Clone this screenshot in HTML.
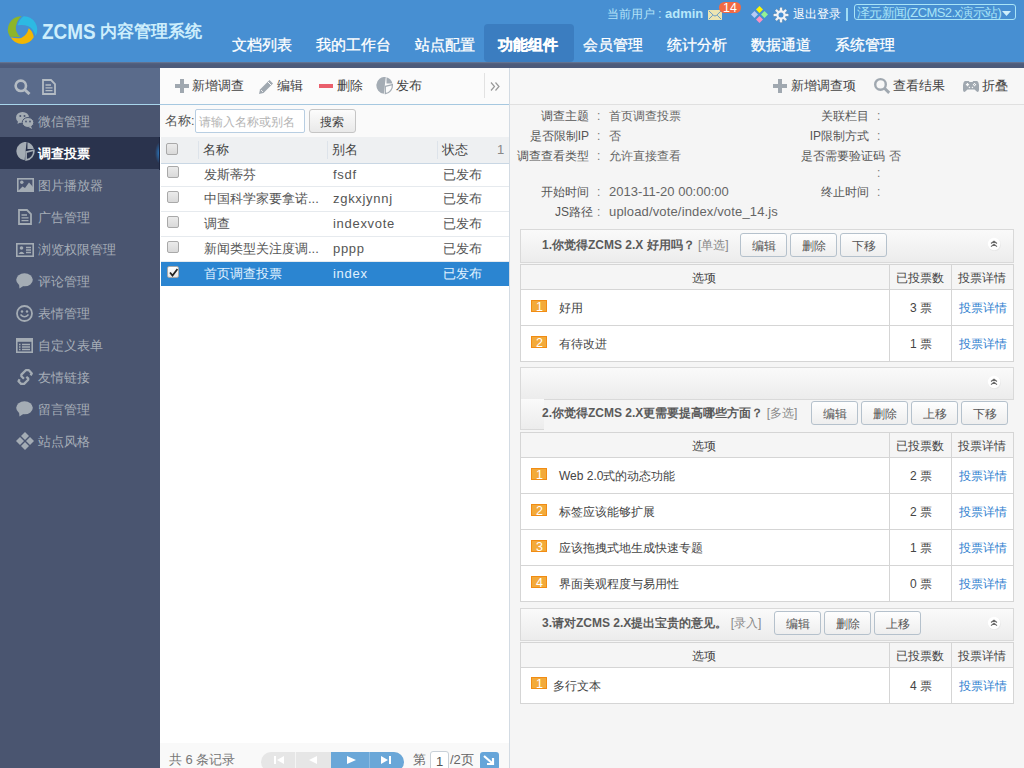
<!DOCTYPE html>
<html><head><meta charset="utf-8">
<style>
*{box-sizing:border-box;margin:0;padding:0}
html,body{width:1024px;height:768px;overflow:hidden;background:#f5f5f5;font-family:"Liberation Sans",sans-serif;font-size:13px;color:#555}
.a{position:absolute;white-space:nowrap;line-height:16px}
svg{position:absolute;display:block}
.nav{position:absolute;top:36px;font-size:15px;color:#fff;line-height:17px;white-space:nowrap;-webkit-text-stroke:0.3px #fff}
.mi{position:absolute;left:0;width:160px;height:32px;color:#a6adb7}
.mi span{position:absolute;left:38px;top:9px;line-height:16px;white-space:nowrap}
.mi svg{left:16px;top:7px}
.cb{position:absolute;width:12px;height:12px;border:1px solid #a9a9a9;border-radius:2px;background:linear-gradient(#ebebeb,#d9d9d9)}
.row{position:absolute;left:161px;width:348px;height:25px;border-bottom:1px solid #e6eaee;background:#fff}
.row span{position:absolute;top:4px;line-height:16px;white-space:nowrap;color:#555}
.btn{position:absolute;height:24px;width:47px;border:1px solid #b5c1cc;border-radius:3px;background:linear-gradient(#fefefe,#eeeeee);color:#555;text-align:center;line-height:24px;font-size:12px}
.qh{position:absolute;left:520px;width:494px;height:33px;border:1px solid #d9d9d9;background:linear-gradient(#fafafa,#ececec)}
.qt{position:absolute;font-weight:bold;color:#5a5a5a;line-height:16px;white-space:nowrap;font-size:12px}
.qs{color:#888;font-weight:normal}
.tb{position:absolute;left:520px;width:494px;border:1px solid #d5d5d5;background:#fff}
.th{position:absolute;left:0;top:0;width:492px;height:25px;background:#f5f5f5;border-bottom:1px solid #d5d5d5}
.tr{position:absolute;left:0;width:492px;height:36px;border-bottom:1px solid #d5d5d5}
.vl{position:absolute;top:0;bottom:0;width:1px;background:#d5d5d5}
.num{position:absolute;left:10px;width:16px;height:12px;background:#f3aa3a;border:1px solid #f18c14;color:#fff;font-size:12.5px;line-height:12px;padding-left:4px;overflow:visible}
.tx{position:absolute;line-height:16px;white-space:nowrap;color:#444;font-size:12px}
.lnk{color:#2f80cf}
.col{position:absolute;width:20px;height:20px}
.il{color:#555;font-size:12px}.ic{color:#777;font-size:12px}.iv{color:#666;font-size:12px}
</style></head><body>
<!-- header -->
<div style="position:absolute;left:0;top:0;width:1024px;height:62px;background:#478fd2"></div>
<div style="position:absolute;left:0;top:62px;width:1024px;height:6px;background:linear-gradient(#6a7c99 0px,#52607f 1.5px,#4c5a7a 3px)"></div>
<!-- logo -->
<svg style="left:4px;top:12px" width="38" height="36" viewBox="0 0 38 36"><g transform="translate(18.4 18.15) scale(0.9) translate(-18.3 -19.2)">
 <path d="M17.3 3.75 A14.8 14.8 0 0 0 4.5 26.5 L16 26.9 Q10.5 22 11 15.5 Q12.5 7.5 17.3 3.75 Z" fill="#8db52a"/>
 <path d="M19.7 3.75 A14.8 14.8 0 0 1 32.8 25.8 Q31 18 25 15 Q19 12.5 12.9 13.8 Q15 7 19.7 3.75 Z" fill="#2db9e3"/>
 <path d="M25.3 17.1 Q30 20.5 30.9 27.2 A14.8 14.8 0 0 1 5.2 27.2 Q12 28.8 17 27.8 Q23.5 25 25.3 17.1 Z" fill="#f2b602"/></g>
</svg>
<div class="a" style="left:42px;top:20px;font-size:22px;line-height:24px;font-weight:bold;color:#cdeefc;transform:scaleX(0.86);transform-origin:0 0">ZCMS</div>
<div class="a" style="left:100px;top:21px;font-size:17.2px;line-height:20px;font-weight:bold;color:#cdeefc">内容管理系统</div>
<!-- nav -->
<div class="nav" style="left:232px">文档列表</div>
<div class="nav" style="left:316px">我的工作台</div>
<div class="nav" style="left:415px">站点配置</div>
<div style="position:absolute;left:484px;top:24px;width:90px;height:38px;background:#3b7dc0;border-radius:4px"></div>
<div class="nav" style="left:498px;font-weight:bold">功能组件</div>
<div class="nav" style="left:583px">会员管理</div>
<div class="nav" style="left:667px">统计分析</div>
<div class="nav" style="left:751px">数据通道</div>
<div class="nav" style="left:835px">系统管理</div>
<!-- user area -->
<div class="a" style="left:607px;top:6px;color:#b3e3f8;font-size:12px">当前用户</div><div class="a" style="left:658px;top:6px;color:#b3e3f8">:</div><div class="a" style="left:665px;top:6px;color:#b8e8fa;font-weight:bold">admin</div>
<svg style="left:708px;top:10px" width="14" height="10" viewBox="0 0 14 10"><rect x="0" y="0" width="14" height="10" fill="#ece5b2"/><path d="M0.8 0.8 L5.5 5.4 Q7 6.6 8.5 5.4 L13.2 0.8 M0.8 9.2 L4.8 5.2 M13.2 9.2 L9.2 5.2" stroke="#5b94c8" stroke-width="0.9" fill="none"/></svg>
<div class="a" style="left:719px;top:2px;width:22px;height:11px;border-radius:6px;background:#f36a43;color:#fff;font-size:12.5px;line-height:13px;text-align:center;overflow:hidden">14</div>
<svg style="left:751px;top:6px" width="17" height="17" viewBox="0 0 17 17">
 <path d="M8.5 0 L12 3.5 L8.5 7 L5 3.5Z" fill="#fbf70a"/>
 <path d="M13.5 5 L17 8.5 L13.5 12 L10 8.5Z" fill="#94f294"/>
 <path d="M8.5 10 L12 13.5 L8.5 17 L5 13.5Z" fill="#fc92c2"/>
 <path d="M3.5 5 L7 8.5 L3.5 12 L0 8.5Z" fill="#b8cbf6"/>
</svg>
<svg style="left:773px;top:7px" width="16" height="16" viewBox="0 0 16 16">
 <g fill="#eef2f6" stroke="#3d6f9e" stroke-width="0.4">
 <rect x="6.6" y="0.2" width="2.8" height="4.5"/><rect x="6.6" y="11.3" width="2.8" height="4.5"/>
 <rect x="0.2" y="6.6" width="4.5" height="2.8"/><rect x="11.3" y="6.6" width="4.5" height="2.8"/>
 <g transform="rotate(45 8 8)"><rect x="6.7" y="0.6" width="2.6" height="4.2"/><rect x="6.7" y="11.2" width="2.6" height="4.2"/><rect x="0.6" y="6.7" width="4.2" height="2.6"/><rect x="11.2" y="6.7" width="4.2" height="2.6"/></g>
 </g>
 <circle cx="8" cy="8" r="3.6" fill="none" stroke="#eef2f6" stroke-width="2.2"/>
</svg>
<div class="a" style="left:793px;top:6px;color:#fff;font-size:12px">退出登录</div>
<div style="position:absolute;left:846px;top:8px;width:1.5px;height:13px;background:#9fdcf4"></div>
<div style="position:absolute;left:854px;top:4px;width:162px;height:16px;border:1px solid #a9e4f7;border-radius:3px"></div>
<div class="a" style="left:857px;top:5px;color:#a9e4f7;letter-spacing:-0.6px">泽元新闻(ZCMS2.x演示站)</div>
<svg style="left:1002px;top:11px" width="9" height="5" viewBox="0 0 9 5"><path d="M0 0 L9 0 L4.5 5Z" fill="#cfeefb"/></svg>

<!-- sidebar -->
<div style="position:absolute;left:0;top:68px;width:160px;height:700px;background:#4a5570"></div>
<div style="position:absolute;left:0;top:68px;width:160px;height:36px;background:#5a6b8b"></div>
<div style="position:absolute;left:0;top:104px;width:160px;height:1px;background:#a9d6ec"></div>
<svg style="left:14px;top:79px" width="17" height="16" viewBox="0 0 17 16"><circle cx="6.8" cy="6.8" r="5.2" fill="none" stroke="#b4bcc4" stroke-width="2.6"/><path d="M10.5 10.5 L15.5 15" stroke="#b4bcc4" stroke-width="3"/></svg>
<svg style="left:42px;top:79px" width="14" height="16" viewBox="0 0 14 16"><path d="M1 1 H9 L13 5 V15 H1Z" fill="none" stroke="#b4bcc4" stroke-width="1.8"/><path d="M3.5 6 H9 M3.5 8.8 H10.5 M3.5 11.6 H10.5" stroke="#b4bcc4" stroke-width="1.3"/></svg>

<div class="mi" style="top:105px"><svg width="18" height="18" viewBox="0 0 18 18" style="top:6px"><ellipse cx="6.5" cy="6.5" rx="6.5" ry="5.6" fill="#a4acb4"/><path d="M2 10 L1.5 13 L5 11Z" fill="#a4acb4"/><ellipse cx="12" cy="11.5" rx="5.8" ry="5" fill="#a4acb4" stroke="#4a5570" stroke-width="1"/><path d="M15 15 L16 18 L12.5 16Z" fill="#a4acb4"/><circle cx="4.3" cy="5" r="1" fill="#4a5570"/><circle cx="8.5" cy="5" r="1" fill="#4a5570"/><circle cx="10" cy="10.5" r="0.9" fill="#4a5570"/><circle cx="14" cy="10.5" r="0.9" fill="#4a5570"/></svg><span>微信管理</span></div>
<div class="mi" style="top:137px;background:#2a334d;color:#fff;font-weight:bold"><svg width="19" height="19" viewBox="0 0 18 18" style="top:4.6px;left:15.6px"><g transform="scale(1.03)"><path d="M9.75 0 A8.45 8.45 0 1 0 7.9 16.8 Z" fill="#a4acb4"/><path d="M10.5 0.2 A8.45 8.45 0 0 1 16.4 6.4 L10.5 6.4 Z" fill="#a4acb4"/><path d="M9.3 9.3 L16.4 7.6 A8.3 8.3 0 0 1 9.3 16.6 Z" fill="none" stroke="#a4acb4" stroke-width="1.5"/></g></svg><span>调查投票</span></div>
<div style="position:absolute;left:150px;top:140px;width:20px;height:26px;background:radial-gradient(ellipse 5px 11px at 10px 13px,#2a7fcc 0%,rgba(42,127,204,0.55) 45%,rgba(42,51,77,0) 100%)"></div><div style="position:absolute;left:159px;top:137px;width:1px;height:33px;background:#1c2540"></div>
<div class="mi" style="top:169px"><svg width="17" height="14" viewBox="0 0 17 14" style="top:9px;left:16.5px"><rect x="0.8" y="0.8" width="15.4" height="12.4" fill="none" stroke="#a4acb4" stroke-width="1.6"/><circle cx="4.8" cy="4.3" r="1.7" fill="#a4acb4"/><path d="M1 13 L5.5 8.5 L8 10 L12 4.5 L16 9 V13Z" fill="#a4acb4"/></svg><span>图片播放器</span></div>
<div class="mi" style="top:201px"><svg width="14" height="16" viewBox="0 0 14 16" style="left:18px;top:8px"><path d="M1 1 H9 L13 5 V15 H1Z" fill="none" stroke="#a4acb4" stroke-width="1.8"/><path d="M3.5 6 H9 M3.5 8.8 H10.5 M3.5 11.6 H10.5" stroke="#a4acb4" stroke-width="1.3"/></svg><span>广告管理</span></div>
<div class="mi" style="top:233px"><svg width="18" height="14" viewBox="0 0 18 14" style="top:10px"><rect x="0.8" y="0.8" width="16.4" height="12.4" fill="none" stroke="#a4acb4" stroke-width="1.6"/><circle cx="5.5" cy="5" r="1.8" fill="#a4acb4"/><path d="M2.5 11 Q5.5 6.5 8.5 11Z" fill="#a4acb4"/><path d="M10 4.5 H15 M10 7 H15 M10 9.5 H15" stroke="#a4acb4" stroke-width="1.3"/></svg><span>浏览权限管理</span></div>
<div class="mi" style="top:265px"><svg width="17" height="16" viewBox="0 0 17 16" style="top:8px"><ellipse cx="8.5" cy="6.8" rx="8.3" ry="6.5" fill="#a4acb4"/><path d="M3 11 L3.5 15.5 L8 12.5Z" fill="#a4acb4"/></svg><span>评论管理</span></div>
<div class="mi" style="top:297px"><svg width="17" height="17" viewBox="0 0 17 17" style="top:8px"><circle cx="8.5" cy="8.5" r="7.5" fill="none" stroke="#a4acb4" stroke-width="1.8"/><circle cx="6" cy="6.5" r="1.2" fill="#a4acb4"/><circle cx="11" cy="6.5" r="1.2" fill="#a4acb4"/><path d="M4.5 9.5 Q8.5 14 12.5 9.5" fill="none" stroke="#a4acb4" stroke-width="1.6"/></svg><span>表情管理</span></div>
<div class="mi" style="top:329px"><svg width="17" height="15" viewBox="0 0 17 15" style="top:9px"><rect x="0.8" y="0.8" width="15.4" height="13.4" fill="none" stroke="#a4acb4" stroke-width="1.6"/><rect x="0.8" y="0.8" width="15.4" height="3" fill="#a4acb4"/><path d="M3 6.5 H4.5 M3 9 H4.5 M3 11.5 H4.5 M6 6.5 H14 M6 9 H14 M6 11.5 H14" stroke="#a4acb4" stroke-width="1.4"/></svg><span>自定义表单</span></div>
<div class="mi" style="top:361px"><svg width="26" height="26" viewBox="0 0 26 26" style="left:12px;top:4px"><path d="M18.6 10.4 L19.8 8.4 L16.9 5.2 L13.8 5.2 L9.4 9.6 L9.4 11.2 L11.9 13.7 M14.3 11.8 L16.2 13.4 L16.2 14.8 L12.1 18.9 L9.1 18.9 L6.5 16.3 L7.6 14.3" fill="none" stroke="#a4acb4" stroke-width="2.3" stroke-linejoin="round"/></svg><span>友情链接</span></div>
<div class="mi" style="top:393px"><svg width="17" height="16" viewBox="0 0 17 16" style="top:8px"><ellipse cx="8.5" cy="6.8" rx="8.3" ry="6.5" fill="#a4acb4"/><path d="M3 11 L3.5 15.5 L8 12.5Z" fill="#a4acb4"/></svg><span>留言管理</span></div>
<div class="mi" style="top:425px"><svg width="18" height="18" viewBox="0 0 18 18" style="top:7px"><path d="M9 0 L13 4 L9 8 L5 4Z M14 5 L18 9 L14 13 L10 9Z M9 10 L13 14 L9 18 L5 14Z M4 5 L8 9 L4 13 L0 9Z" fill="#a4acb4"/></svg><span>站点风格</span></div>

<!-- middle panel -->
<div style="position:absolute;left:160px;top:68px;width:349px;height:700px;background:#fff"></div>
<div style="position:absolute;left:160px;top:68px;width:349px;height:36px;background:#fbfbfb"></div>
<div style="position:absolute;left:160px;top:104px;width:349px;height:1px;background:#a6c8e0"></div>
<div style="position:absolute;left:160px;top:105px;width:349px;height:32px;background:#fafafa"></div>
<div style="position:absolute;left:509px;top:68px;width:1px;height:700px;background:#d3dbe3"></div>
<!-- toolbar mid -->
<svg style="left:175px;top:79px" width="14" height="14" viewBox="0 0 14 14"><path d="M5 0 H9 V5 H14 V9 H9 V14 H5 V9 H0 V5 H5Z" fill="#a0a8b0"/></svg>
<div class="a" style="left:192px;top:78px;color:#444">新增调查</div>
<svg style="left:258px;top:79px" width="16" height="16" viewBox="0 0 16 16"><path d="M11.5 1 L15 4.5 L5.5 14 L1 15 L2 10.5Z" fill="#a0a8b0"/><path d="M10 3 L13 6" stroke="#fbfbfb" stroke-width="1"/><path d="M3 11 L5 13" stroke="#fbfbfb" stroke-width="0.8"/></svg>
<div class="a" style="left:277px;top:78px;color:#444">编辑</div>
<div style="position:absolute;left:319px;top:84px;width:14px;height:4px;background:#ea5f6c"></div>
<div class="a" style="left:337px;top:78px;color:#444">删除</div>
<svg style="left:376px;top:77px" width="18" height="18" viewBox="0 0 18 18"><path d="M9.75 0 A8.45 8.45 0 1 0 7.9 16.8 Z" fill="#a4acb4"/><path d="M10.5 0.2 A8.45 8.45 0 0 1 16.4 6.4 L10.5 6.4 Z" fill="#a4acb4"/><path d="M9.3 9.3 L16.4 7.6 A8.3 8.3 0 0 1 9.3 16.6 Z" fill="none" stroke="#a4acb4" stroke-width="1.25"/></svg>
<div class="a" style="left:396px;top:78px;color:#444">发布</div>
<div style="position:absolute;left:484px;top:73px;width:1px;height:25px;background:#e2e2e2"></div>
<svg style="left:490px;top:82px" width="10" height="9" viewBox="0 0 10 9"><path d="M1 0.5 L4.5 4.5 L1 8.5 M5.5 0.5 L9 4.5 L5.5 8.5" fill="none" stroke="#999" stroke-width="1.2"/></svg>
<!-- search -->
<div class="a" style="left:165px;top:113px;color:#555;font-size:12.5px">名称:</div>
<div style="position:absolute;left:195px;top:109px;width:110px;height:24px;border:1px solid #b8cee2;border-radius:2px;background:#fff"></div>
<div class="a" style="left:199px;top:114px;color:#b4b4b4;font-size:12px">请输入名称或别名</div>
<div style="position:absolute;left:309px;top:109px;width:47px;height:24px;border:1px solid #c5c5c5;border-radius:3px;background:linear-gradient(#fcfcfc,#e9e9e9)"></div>
<div class="a" style="left:320px;top:114px;color:#444;font-size:12px">搜索</div>
<!-- grid header -->
<div style="position:absolute;left:161px;top:137px;width:348px;height:27px;background:#eef0f2;border-bottom:1px solid #c9d7e4"></div>
<div class="cb" style="left:166px;top:143px"></div>
<div style="position:absolute;left:198px;top:141px;width:1px;height:18px;background:#dde3ea"></div>
<div style="position:absolute;left:327px;top:141px;width:1px;height:18px;background:#dde3ea"></div>
<div style="position:absolute;left:437px;top:141px;width:1px;height:18px;background:#dde3ea"></div>
<div class="a" style="left:203px;top:142px;color:#444">名称</div>
<div class="a" style="left:332px;top:142px;color:#444">别名</div>
<div class="a" style="left:442px;top:142px;color:#444">状态</div>
<div class="a" style="left:497px;top:142px;color:#888">1</div>
<!-- rows -->
<div class="row" style="top:164px;height:23px"><div class="cb" style="left:6px;top:2px"></div><span style="left:43px;top:3px">发斯蒂芬</span><span style="left:172px;letter-spacing:0.7px;top:3px">fsdf</span><span style="left:282px;top:3px">已发布</span></div>
<div class="row" style="top:187px"><div class="cb" style="left:6px;top:4px"></div><span style="left:43px">中国科学家要拿诺...</span><span style="left:172px;letter-spacing:0.7px">zgkxjynnj</span><span style="left:282px">已发布</span></div>
<div class="row" style="top:212px"><div class="cb" style="left:6px;top:4px"></div><span style="left:43px">调查</span><span style="left:172px;letter-spacing:0.7px">indexvote</span><span style="left:282px">已发布</span></div>
<div class="row" style="top:237px"><div class="cb" style="left:6px;top:4px"></div><span style="left:43px">新闻类型关注度调...</span><span style="left:172px;letter-spacing:0.7px">pppp</span><span style="left:282px">已发布</span></div>
<div class="row" style="top:262px;height:24px;background:#2b85d1;border-bottom:none"><div class="cb" style="left:6px;top:4px;background:linear-gradient(#fff,#e6e6e6)"><svg style="left:1px;top:1px" width="9" height="9" viewBox="0 0 9 9"><path d="M1 4.5 L3.5 7.5 L8.5 1" fill="none" stroke="#222" stroke-width="1.8"/></svg></div><span style="left:43px;color:#e0f2ff">首页调查投票</span><span style="left:172px;color:#e0f2ff;letter-spacing:0.7px">index</span><span style="left:282px;color:#e0f2ff">已发布</span></div>
<!-- footer -->
<div style="position:absolute;left:160px;top:743px;width:349px;height:25px;background:#f9f9f9"></div>
<div class="a" style="left:169px;top:752px;color:#777">共 6 条记录</div>
<div style="position:absolute;left:261px;top:752px;width:143px;height:20px;border-radius:10px;overflow:hidden;background:#e6e6e6">
 <div style="position:absolute;left:34px;top:0;width:1px;height:20px;background:#f4f4f4"></div>
 <div style="position:absolute;left:70px;top:0;width:73px;height:20px;background:#6aa7d8"></div>
 <div style="position:absolute;left:108px;top:0;width:1px;height:20px;background:#8bbbe2"></div>
 <svg style="left:13px;top:3px" width="10" height="10" viewBox="0 0 10 10"><path d="M0 1 H2 V9 H0Z M10 1 L3 5 L10 9Z" fill="#fff"/></svg>
 <svg style="left:47px;top:3px" width="10" height="10" viewBox="0 0 10 10"><path d="M9 1 L1 5 L9 9Z" fill="#fff"/></svg>
 <svg style="left:85px;top:3px" width="11" height="10" viewBox="0 0 11 10"><path d="M1 1 L10 5 L1 9Z" fill="#fff"/></svg>
 <svg style="left:120px;top:3px" width="11" height="10" viewBox="0 0 11 10"><path d="M0 1 L7 5 L0 9Z M8 1 H10 V9 H8Z" fill="#fff"/></svg>
</div>
<div class="a" style="left:413px;top:752px;color:#666">第</div>
<div style="position:absolute;left:430px;top:751px;width:19px;height:21px;border:1px solid #c8d0d8;border-radius:3px;background:#fff"></div>
<div class="a" style="left:436px;top:754px;color:#555">1</div>
<div class="a" style="left:450px;top:752px;color:#666">/2页</div>
<div style="position:absolute;left:480px;top:752px;width:19px;height:18px;border-radius:3px;background:#66a5d9"></div>
<svg style="left:483px;top:755px" width="13" height="12" viewBox="0 0 13 12"><path d="M1 1 L9 8 M4 9 H10 V3" fill="none" stroke="#fff" stroke-width="2.2"/></svg>

<!-- right panel -->
<div style="position:absolute;left:510px;top:68px;width:514px;height:37px;background:#f7f7f7;border-bottom:1px solid #e0e0e0"></div>
<svg style="left:773px;top:79px" width="14" height="14" viewBox="0 0 14 14"><path d="M5 0 H9 V5 H14 V9 H9 V14 H5 V9 H0 V5 H5Z" fill="#a0a8b0"/></svg>
<div class="a" style="left:791px;top:78px;color:#444">新增调查项</div>
<svg style="left:873px;top:77px" width="18" height="17" viewBox="0 0 18 17"><circle cx="7.5" cy="7.4" r="5.3" fill="none" stroke="#a0a8b0" stroke-width="2.4"/><path d="M11.2 11 L16.2 15.8" stroke="#a0a8b0" stroke-width="3"/></svg>
<div class="a" style="left:893px;top:78px;color:#444">查看结果</div>
<svg style="left:958px;top:76px" width="26" height="20" viewBox="0 0 26 20"><path d="M6.8 5 L10.8 5 L11.5 5.9 L14.5 5.9 L15.2 5 L19.2 5 Q20.8 5.8 21 9 L21 14 Q21 16 19.3 16 L16.5 13.5 L9.5 13.5 L6.7 16 Q5 16 5 14 L5 9 Q5.2 5.8 6.8 5Z" fill="#a0a8b0"/><path d="M9.5 7 V10.2 M7.9 8.6 H11.1 M16.5 7 V10.2 M14.9 8.6 H18.1" stroke="#f7f7f7" stroke-width="1.3"/><circle cx="16.5" cy="8.6" r="0.6" fill="#a0a8b0"/><rect x="10.8" y="10.8" width="1.3" height="1.3" fill="#f7f7f7"/><rect x="13.8" y="10.8" width="1.3" height="1.3" fill="#f7f7f7"/></svg>
<div class="a" style="left:982px;top:78px;color:#444">折叠</div>

<!-- info -->
<div class="a il" style="right:435px;top:108px">调查主题</div><div class="a ic" style="left:597px;top:108px">:</div><div class="a iv" style="left:609px;top:108px">首页调查投票</div>
<div class="a il" style="right:435px;top:128px">是否限制IP</div><div class="a ic" style="left:597px;top:128px">:</div><div class="a iv" style="left:609px;top:128px">否</div>
<div class="a il" style="right:435px;top:148px">调查查看类型</div><div class="a ic" style="left:597px;top:148px">:</div><div class="a iv" style="left:609px;top:148px">允许直接查看</div>
<div class="a il" style="right:435px;top:184px">开始时间</div><div class="a ic" style="left:597px;top:184px">:</div><div class="a iv" style="left:609px;top:184px;font-size:13px">2013-11-20 00:00:00</div>
<div class="a il" style="right:431px;top:204px">JS路径</div><div class="a ic" style="left:597px;top:204px">:</div><div class="a iv" style="left:609px;top:204px;font-size:13px;letter-spacing:0.15px">upload/vote/index/vote_14.js</div>
<div class="a il" style="right:155px;top:108px">关联栏目</div><div class="a ic" style="left:877px;top:108px">:</div>
<div class="a il" style="right:155px;top:128px">IP限制方式</div><div class="a ic" style="left:877px;top:128px">:</div>
<div class="a il" style="right:139px;top:148px">是否需要验证码</div><div class="a iv" style="left:889px;top:148px">否</div><div class="a ic" style="left:877px;top:165px">:</div>
<div class="a il" style="right:155px;top:184px">终止时间</div><div class="a ic" style="left:877px;top:184px">:</div>

<!-- question 1 -->
<div class="qh" style="top:229px;height:34px"></div>
<div class="qt" style="left:542px;top:237px">1.你觉得ZCMS 2.X 好用吗？ <span class="qs">[单选]</span></div>
<div class="btn" style="left:740px;top:233px">编辑</div>
<div class="btn" style="left:790px;top:233px">删除</div>
<div class="btn" style="left:840px;top:233px">下移</div>
<svg style="left:986px;top:236px" width="17" height="17" viewBox="0 0 17 17"><circle cx="8.6" cy="8.6" r="6.4" fill="#e2e2e2" opacity="0.7"/><circle cx="8.1" cy="8" r="6.2" fill="#fff"/><path d="M5 7.5 L8 5.2 L11 7.5 M5 10.6 L8 8.3 L11 10.6" fill="none" stroke="#6a6a6a" stroke-width="1.1"/></svg>
<div class="tb" style="top:264px;height:98px">
 <div class="th"></div>
 <div class="tr" style="top:25px"></div>
 <div class="tr" style="top:61px;border-bottom:none"></div>
 <div class="vl" style="left:368px"></div><div class="vl" style="left:430px"></div>
 <div class="tx" style="left:171px;top:5px">选项</div>
 <div class="tx" style="left:375px;top:5px">已投票数</div>
 <div class="tx" style="left:437px;top:5px">投票详情</div>
 <div class="num" style="top:35px">1</div><div class="tx" style="left:38px;top:35px">好用</div>
 <div class="tx" style="left:389px;top:35px">3 票</div><div class="tx lnk" style="left:438px;top:35px">投票详情</div>
 <div class="num" style="top:71px">2</div><div class="tx" style="left:38px;top:71px">有待改进</div>
 <div class="tx" style="left:389px;top:71px">1 票</div><div class="tx lnk" style="left:438px;top:71px">投票详情</div>
</div>

<!-- question 2 -->
<div class="qh" style="top:367px;height:33px"></div>
<div style="position:absolute;left:520px;top:399px;width:24px;height:31px;border:1px solid #d9d9d9;border-top:none;border-right:none;background:linear-gradient(#fafafa,#ececec)"></div>
<svg style="left:986px;top:374px" width="17" height="17" viewBox="0 0 17 17"><circle cx="8.6" cy="8.6" r="6.4" fill="#e2e2e2" opacity="0.7"/><circle cx="8.1" cy="8" r="6.2" fill="#fff"/><path d="M5 7.5 L8 5.2 L11 7.5 M5 10.6 L8 8.3 L11 10.6" fill="none" stroke="#6a6a6a" stroke-width="1.1"/></svg>
<div class="qt" style="left:542px;top:405px">2.你觉得ZCMS 2.X更需要提高哪些方面？ <span class="qs">[多选]</span></div>
<div class="btn" style="left:811px;top:401px">编辑</div>
<div class="btn" style="left:861px;top:401px">删除</div>
<div class="btn" style="left:911px;top:401px">上移</div>
<div class="btn" style="left:961px;top:401px">下移</div>
<div class="tb" style="top:432px;height:170px">
 <div class="th"></div>
 <div class="tr" style="top:25px"></div>
 <div class="tr" style="top:61px"></div>
 <div class="tr" style="top:97px"></div>
 <div class="tr" style="top:133px;border-bottom:none"></div>
 <div class="vl" style="left:368px"></div><div class="vl" style="left:430px"></div>
 <div class="tx" style="left:171px;top:5px">选项</div>
 <div class="tx" style="left:375px;top:5px">已投票数</div>
 <div class="tx" style="left:437px;top:5px">投票详情</div>
 <div class="num" style="top:35px">1</div><div class="tx" style="left:38px;top:35px">Web 2.0式的动态功能</div>
 <div class="tx" style="left:389px;top:35px">2 票</div><div class="tx lnk" style="left:438px;top:35px">投票详情</div>
 <div class="num" style="top:71px">2</div><div class="tx" style="left:38px;top:71px">标签应该能够扩展</div>
 <div class="tx" style="left:389px;top:71px">2 票</div><div class="tx lnk" style="left:438px;top:71px">投票详情</div>
 <div class="num" style="top:107px">3</div><div class="tx" style="left:38px;top:107px">应该拖拽式地生成快速专题</div>
 <div class="tx" style="left:389px;top:107px">1 票</div><div class="tx lnk" style="left:438px;top:107px">投票详情</div>
 <div class="num" style="top:143px">4</div><div class="tx" style="left:38px;top:143px">界面美观程度与易用性</div>
 <div class="tx" style="left:389px;top:143px">0 票</div><div class="tx lnk" style="left:438px;top:143px">投票详情</div>
</div>

<!-- question 3 -->
<div class="qh" style="top:608px;height:33px"></div>
<div class="qt" style="left:542px;top:615px">3.请对ZCMS 2.X提出宝贵的意见。 <span class="qs">[录入]</span></div>
<div class="btn" style="left:774px;top:611px">编辑</div>
<div class="btn" style="left:824px;top:611px">删除</div>
<div class="btn" style="left:874px;top:611px">上移</div>
<svg style="left:986px;top:615px" width="17" height="17" viewBox="0 0 17 17"><circle cx="8.6" cy="8.6" r="6.4" fill="#e2e2e2" opacity="0.7"/><circle cx="8.1" cy="8" r="6.2" fill="#fff"/><path d="M5 7.5 L8 5.2 L11 7.5 M5 10.6 L8 8.3 L11 10.6" fill="none" stroke="#6a6a6a" stroke-width="1.1"/></svg>
<div class="tb" style="top:642px;height:62px">
 <div class="th"></div>
 <div class="tr" style="top:25px;border-bottom:none"></div>
 <div class="vl" style="left:368px"></div><div class="vl" style="left:430px"></div>
 <div class="tx" style="left:171px;top:5px">选项</div>
 <div class="tx" style="left:375px;top:5px">已投票数</div>
 <div class="tx" style="left:437px;top:5px">投票详情</div>
 <div class="num" style="top:34px">1</div><div class="tx" style="left:32px;top:35px">多行文本</div>
 <div class="tx" style="left:389px;top:35px">4 票</div><div class="tx lnk" style="left:438px;top:35px">投票详情</div>
</div>
</body></html>
